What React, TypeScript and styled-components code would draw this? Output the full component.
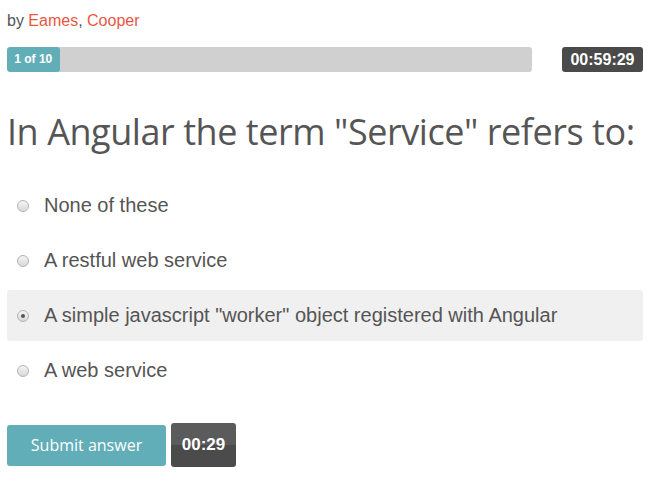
import styled, { createGlobalStyle } from "styled-components";

const GlobalStyle = createGlobalStyle`
  body {
    margin: 0;
    background: #fff;
    font-family: "Liberation Sans", Arial, sans-serif;
    color: #555;
  }
`;

const Page = styled.div`
  width: 636px;
  padding: 10px 7px 0;
`;

const Byline = styled.div`
  font-size: 16px;
  line-height: 22px;
  color: #555;
`;

const Author = styled.span`
  color: #e9573f;
`;

const ProgressRow = styled.div`
  display: flex;
  justify-content: space-between;
  align-items: center;
  margin-top: 15px;
`;

const Track = styled.div`
  width: 525px;
  height: 25px;
  background: #d0d0d0;
  border-radius: 3px;
  overflow: hidden;
`;

const Fill = styled.div`
  height: 100%;
  background: #62aeb8;
  color: #fff;
  font-size: 12px;
  font-weight: bold;
  line-height: 25px;
  text-align: center;
  border-radius: 3px;
`;

const Clock = styled.div<{ $big?: boolean }>`
  background: ${({ $big }) => ($big ? "linear-gradient(#5b5b5b 50%, #4b4b4b 50%)" : "#4a4a4a")};
  color: #fff;
  font-weight: bold;
  font-size: ${({ $big }) => ($big ? "17px" : "16px")};
  border-radius: 3px;
  text-align: center;
  width: ${({ $big }) => ($big ? "65px" : "81px")};
  height: ${({ $big }) => ($big ? "44px" : "25px")};
  line-height: ${({ $big }) => ($big ? "44px" : "25px")};
`;

const Question = styled.h1`
  font-family: "Open Sans", sans-serif;
  font-weight: 400;
  font-size: 36px;
  line-height: 48px;
  color: #555;
  margin: 36px 0 0;
  letter-spacing: -0.45px;
`;

const Options = styled.div`
  display: flex;
  flex-direction: column;
  gap: 4px;
  margin-top: 24px;
`;

const Option = styled.label<{ $selected?: boolean }>`
  display: flex;
  align-items: center;
  gap: 15px;
  height: 51px;
  padding-left: 10px;
  border-radius: 3px;
  background: ${({ $selected }) => ($selected ? "#f0f0f0" : "transparent")};
  font-size: 20px;
  color: #555;
`;

const Radio = styled.span<{ $checked?: boolean }>`
  width: 10px;
  height: 10px;
  border-radius: 50%;
  border: 1px solid #b4b4b4;
  background: linear-gradient(#f4f4f4, #d9d9d9);
  display: flex;
  align-items: center;
  justify-content: center;
  &::after {
    content: "";
    display: ${({ $checked }) => ($checked ? "block" : "none")};
    width: 4px;
    height: 4px;
    border-radius: 50%;
    background: #555;
  }
`;

const Actions = styled.div`
  display: flex;
  align-items: center;
  gap: 5px;
  margin-top: 27px;
`;

const Submit = styled.button`
  width: 159px;
  height: 41px;
  background: #62aeb8;
  color: #fff;
  border: none;
  border-radius: 3px;
  font-family: "Open Sans", sans-serif;
  font-size: 16px;
  cursor: pointer;
`;

const answers = [
  "None of these",
  "A restful web service",
  'A simple javascript "worker" object registered with Angular',
  "A web service",
];

export default function App() {
  const selected = 2;
  return (
    <>
      <GlobalStyle />
      <Page>
        <Byline>
          by <Author>Eames</Author>, <Author>Cooper</Author>
        </Byline>
        <ProgressRow>
          <Track>
            <Fill style={{ width: `${(1 / 10) * 100}%` }}>1 of 10</Fill>
          </Track>
          <Clock>00:59:29</Clock>
        </ProgressRow>
        <Question>In Angular the term "Service" refers to:</Question>
        <Options>
          {answers.map((a, i) => (
            <Option key={a} $selected={i === selected}>
              <Radio $checked={i === selected} />
              {a}
            </Option>
          ))}
        </Options>
        <Actions>
          <Submit>Submit answer</Submit>
          <Clock $big>00:29</Clock>
        </Actions>
      </Page>
    </>
  );
}
